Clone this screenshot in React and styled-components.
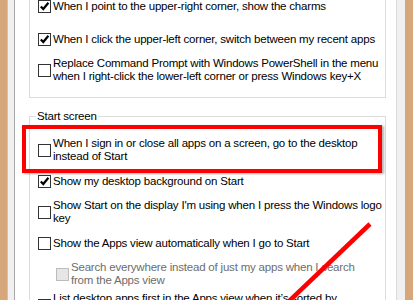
import React from "react";
import styled, { createGlobalStyle } from "styled-components";

const GlobalStyle = createGlobalStyle`
  html, body { margin: 0; padding: 0; background: #d6a77a; overflow: hidden; }
  body { font-family: "Liberation Sans", Arial, sans-serif; }
`;

const Frame = styled.div`
  position: relative;
  display: flex;
  box-sizing: border-box;
  height: 300px;
  width: 413px;
  padding: 0 8px 0 7px;
  background: #d6a77a;
  overflow: hidden;
`;

const Panel = styled.div`
  flex: 1;
  display: flex;
  background: #f0f0f0;
  border-left: 1px solid #c4c4c4;
  padding: 0 8px 0 6px;
`;

const Sheet = styled.div`
  flex: 1;
  background: #ffffff;
  border-left: 1px solid #a8a8a8;
  border-right: 1px solid #dadada;
  padding: 0 10px 0 14px;
  overflow: hidden;
`;

const Group = styled.fieldset`
  margin: ${(p) => (p.$first ? "-35px 0 11px" : "0 0 11px")};
  padding: 14px 0 14px 8px;
  border: 1px solid #dcdcdc;
  min-width: 0;
`;

const Legend = styled.legend`
  margin-left: -2px;
  padding: 0 1px;
  font-size: 11.5px;
  line-height: 14px;
  letter-spacing: -0.2px;
  color: #000;
`;

const Rows = styled.div`
  display: flex;
  flex-direction: column;
  gap: 5px;
`;

const Row = styled.div`
  position: relative;
  display: flex;
  align-items: center;
  gap: 2px;
  min-height: 26px;
  padding-left: ${(p) => p.$indent || 0}px;
  margin-bottom: ${(p) => p.$after || 0}px;
`;

const Box = styled.span`
  flex: none;
  box-sizing: border-box;
  width: 13px;
  height: 13px;
  display: grid;
  place-items: center;
  border: 1px solid ${(p) => (p.$disabled ? "#bcbcbc" : "#333333")};
  background: ${(p) => (p.$disabled ? "#e6e6e6" : "#ffffff")};
`;

const Label = styled.span`
  font-size: 11.5px;
  line-height: 13px;
  letter-spacing: -0.2px;
  white-space: nowrap;
  color: ${(p) => (p.$disabled ? "#6d6d6d" : "#000000")};
`;

const Highlight = styled.div`
  position: absolute;
  left: -16px;
  top: -12px;
  width: 360px;
  height: 48px;
  box-sizing: border-box;
  border: 4px solid #ff0000;
  box-shadow: 2px 1px 2px rgba(0, 0, 0, 0.3);
  pointer-events: none;
`;

const Arrow = styled.svg`
  position: absolute;
  left: 0;
  top: 0;
  pointer-events: none;
`;

const Check = () => (
  <svg width="11" height="11" viewBox="0 0 11 11">
    <polyline
      points="1.8,5.4 4.3,8 9.4,1.8"
      fill="none"
      stroke="#000"
      strokeWidth="2.2"
    />
  </svg>
);

const Option = ({ checked, disabled, indent, after, lines, children }) => (
  <Row $indent={indent} $after={after}>
    {children}
    <Box $disabled={disabled}>{checked && <Check />}</Box>
    <Label $disabled={disabled}>
      {lines.map((l, i) => (
        <React.Fragment key={i}>
          {i > 0 && <br />}
          {l}
        </React.Fragment>
      ))}
    </Label>
  </Row>
);

export default function App() {
  return (
    <>
      <GlobalStyle />
      <Frame>
        <Panel>
          <Sheet>
            <Group $first>
              <Legend>Corner navigation</Legend>
              <Rows>
                <Option
                  checked
                  after={2}
                  lines={["When I point to the upper-right corner, show the charms"]}
                />
                <Option
                  checked
                  lines={["When I click the upper-left corner, switch between my recent apps"]}
                />
                <Option
                  lines={[
                    "Replace Command Prompt with Windows PowerShell in the menu",
                    "when I right-click the lower-left corner or press Windows key+X",
                  ]}
                />
              </Rows>
            </Group>
            <Group>
              <Legend>Start screen</Legend>
              <Rows>
                <Option
                  lines={[
                    "When I sign in or close all apps on a screen, go to the desktop",
                    "instead of Start",
                  ]}
                >
                  <Highlight />
                </Option>
                <Option checked lines={["Show my desktop background on Start"]} />
                <Option
                  lines={[
                    "Show Start on the display I'm using when I press the Windows logo",
                    "key",
                  ]}
                />
                <Option lines={["Show the Apps view automatically when I go to Start"]} />
                <Option
                  disabled
                  indent={18}
                  lines={[
                    "Search everywhere instead of just my apps when I search",
                    "from the Apps view",
                  ]}
                />
                <Option
                  lines={[
                    "List desktop apps first in the Apps view when it\u2019s sorted by",
                    "category",
                  ]}
                />
              </Rows>
            </Group>
          </Sheet>
        </Panel>
        <Arrow width="413" height="300" viewBox="0 0 413 300">
          <line x1="370" y1="224" x2="285" y2="305" stroke="#ff0000" strokeWidth="4.5" />
        </Arrow>
      </Frame>
    </>
  );
}
